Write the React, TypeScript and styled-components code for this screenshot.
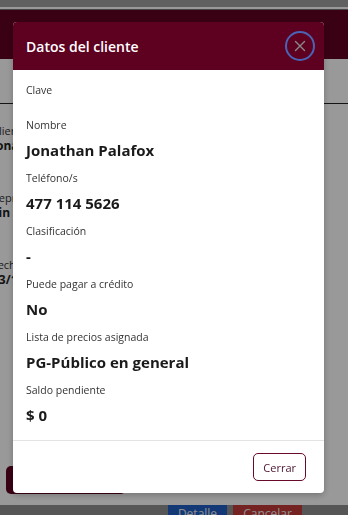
import React from 'react';
import styled, { createGlobalStyle } from 'styled-components';

const GlobalStyle = createGlobalStyle`
  html, body {
    margin: 0;
    padding: 0;
    height: 100%;
    overflow: hidden;
  }
  body {
    font-family: "Open Sans", "Noto Sans", "Liberation Sans", sans-serif;
    color: #212529;
    background: #ffffff;
  }
`;

const Page = styled.div`
  display: flex;
  flex-direction: column;
  height: 515px;
  overflow: hidden;
`;

const BrowserStrip = styled.div`
  height: 7px;
  border-bottom: 1px solid #777;
  box-sizing: content-box;
  padding-bottom: 2px;
  background-clip: content-box;
  background-color: #a0a0a0;
`;

const NavBar = styled.div`
  height: 49px;
  background: #610022;
`;

const SubBar = styled.div`
  height: 44px;
  background: #ffffff;
  border-bottom: 1px solid #222;
`;

const Content = styled.div`
  flex: 1;
  display: flex;
  flex-direction: column;
  padding: 20px 0 0;
  margin-left: -8px;
`;

const BgLabel = styled.div`
  font-size: 11px;
  line-height: 14px;
  color: #333;
`;

const BgValue = styled.div`
  font-size: 12px;
  line-height: 16px;
  font-weight: 700;
  color: #222;
  margin-bottom: 37px;
`;

const BgActionRow = styled.div`
  margin-top: auto;
  padding: 0 0 11px 14px;
`;

const BgMainButton = styled.div`
  width: 120px;
  height: 28px;
  border-radius: 5px;
  background: #610022;
`;

const BottomBar = styled.div`
  height: 10px;
  background: #8f8f8f;
  display: flex;
  justify-content: flex-end;
  gap: 6px;
  padding-right: 46px;
  overflow: hidden;
`;

const BgButton = styled.div<{ $color: string; $width: number }>`
  width: ${p => p.$width}px;
  height: 20px;
  background: ${p => p.$color};
  color: #eee;
  font-size: 12px;
  line-height: 18px;
  text-align: center;
`;

const Backdrop = styled.div`
  position: fixed;
  inset: 0;
  background: rgba(0, 0, 0, 0.4);
  padding: 22px 0 0 13px;
`;

const Modal = styled.div`
  width: 311px;
  background: #fff;
  border-radius: 4px;
  overflow: hidden;
  box-shadow: 0 2px 6px rgba(0, 0, 0, 0.25);
`;

const Header = styled.div`
  height: 48px;
  background: #5e0020;
  display: flex;
  align-items: center;
  justify-content: space-between;
  padding: 0 9px 0 13px;
`;

const Title = styled.h5`
  margin: 0;
  color: #fff;
  font-size: 14px;
  font-weight: 600;
`;

const CloseButton = styled.button`
  width: 30px;
  height: 30px;
  border-radius: 50%;
  border: 2px solid #4a63b5;
  background: transparent;
  display: flex;
  align-items: center;
  justify-content: center;
  padding: 0;
`;

const Body = styled.div`
  padding: 12px 13px 5px;
`;

const Field = styled.div`
  margin-bottom: 10px;
`;

const Label = styled.div`
  font-size: 10.5px;
  line-height: 16px;
  color: #333;
`;

const Value = styled.div`
  margin-top: 7px;
  min-height: 2px;
  font-size: 15px;
  line-height: 20px;
  font-weight: 700;
  color: #1a1a1a;
`;

const Footer = styled.div`
  border-top: 1px solid #e3e3e3;
  padding: 12px 18px 12px 12px;
  display: flex;
  justify-content: flex-end;
`;

const FooterButton = styled.button`
  height: 28px;
  padding: 0 9px;
  border: 1px solid #6a0a2a;
  border-radius: 5px;
  background: #fff;
  color: #4a1530;
  font-family: inherit;
  font-size: 11px;
`;

const fields: { label: string; value: string }[] = [
  { label: 'Clave', value: '' },
  { label: 'Nombre', value: 'Jonathan Palafox' },
  { label: 'Teléfono/s', value: '477 114 5626' },
  { label: 'Clasificación', value: '-' },
  { label: 'Puede pagar a crédito', value: 'No' },
  { label: 'Lista de precios asignada', value: 'PG-Público en general' },
  { label: 'Saldo pendiente', value: '$ 0' },
];

const XIcon = () => (
  <svg width="12" height="12" viewBox="0 0 12 12">
    <path d="M1.5 1.5 L10.5 10.5 M10.5 1.5 L1.5 10.5" stroke="#8a8a8a" strokeWidth="1.4" strokeLinecap="round" />
  </svg>
);

export default function App() {
  return (
    <>
      <GlobalStyle />
      <Page>
        <BrowserStrip />
        <NavBar />
        <SubBar />
        <Content>
          <BgLabel>Cliente</BgLabel>
          <BgValue>Jonathan Palafox</BgValue>
          <BgLabel>Representante</BgLabel>
          <BgValue>Sin crédito</BgValue>
          <BgLabel>Fecha</BgLabel>
          <BgValue>03/11/2023</BgValue>
          <BgActionRow>
            <BgMainButton />
          </BgActionRow>
        </Content>
        <BottomBar>
          <BgButton $color="#1f5fc4" $width={59}>Detalle</BgButton>
          <BgButton $color="#c23a3a" $width={69}>Cancelar</BgButton>
        </BottomBar>
      </Page>
      <Backdrop>
        <Modal>
          <Header>
            <Title>Datos del cliente</Title>
            <CloseButton aria-label="Cerrar">
              <XIcon />
            </CloseButton>
          </Header>
          <Body>
            {fields.map(f => (
              <Field key={f.label}>
                <Label>{f.label}</Label>
                <Value>{f.value}</Value>
              </Field>
            ))}
          </Body>
          <Footer>
            <FooterButton>Cerrar</FooterButton>
          </Footer>
        </Modal>
      </Backdrop>
    </>
  );
}
